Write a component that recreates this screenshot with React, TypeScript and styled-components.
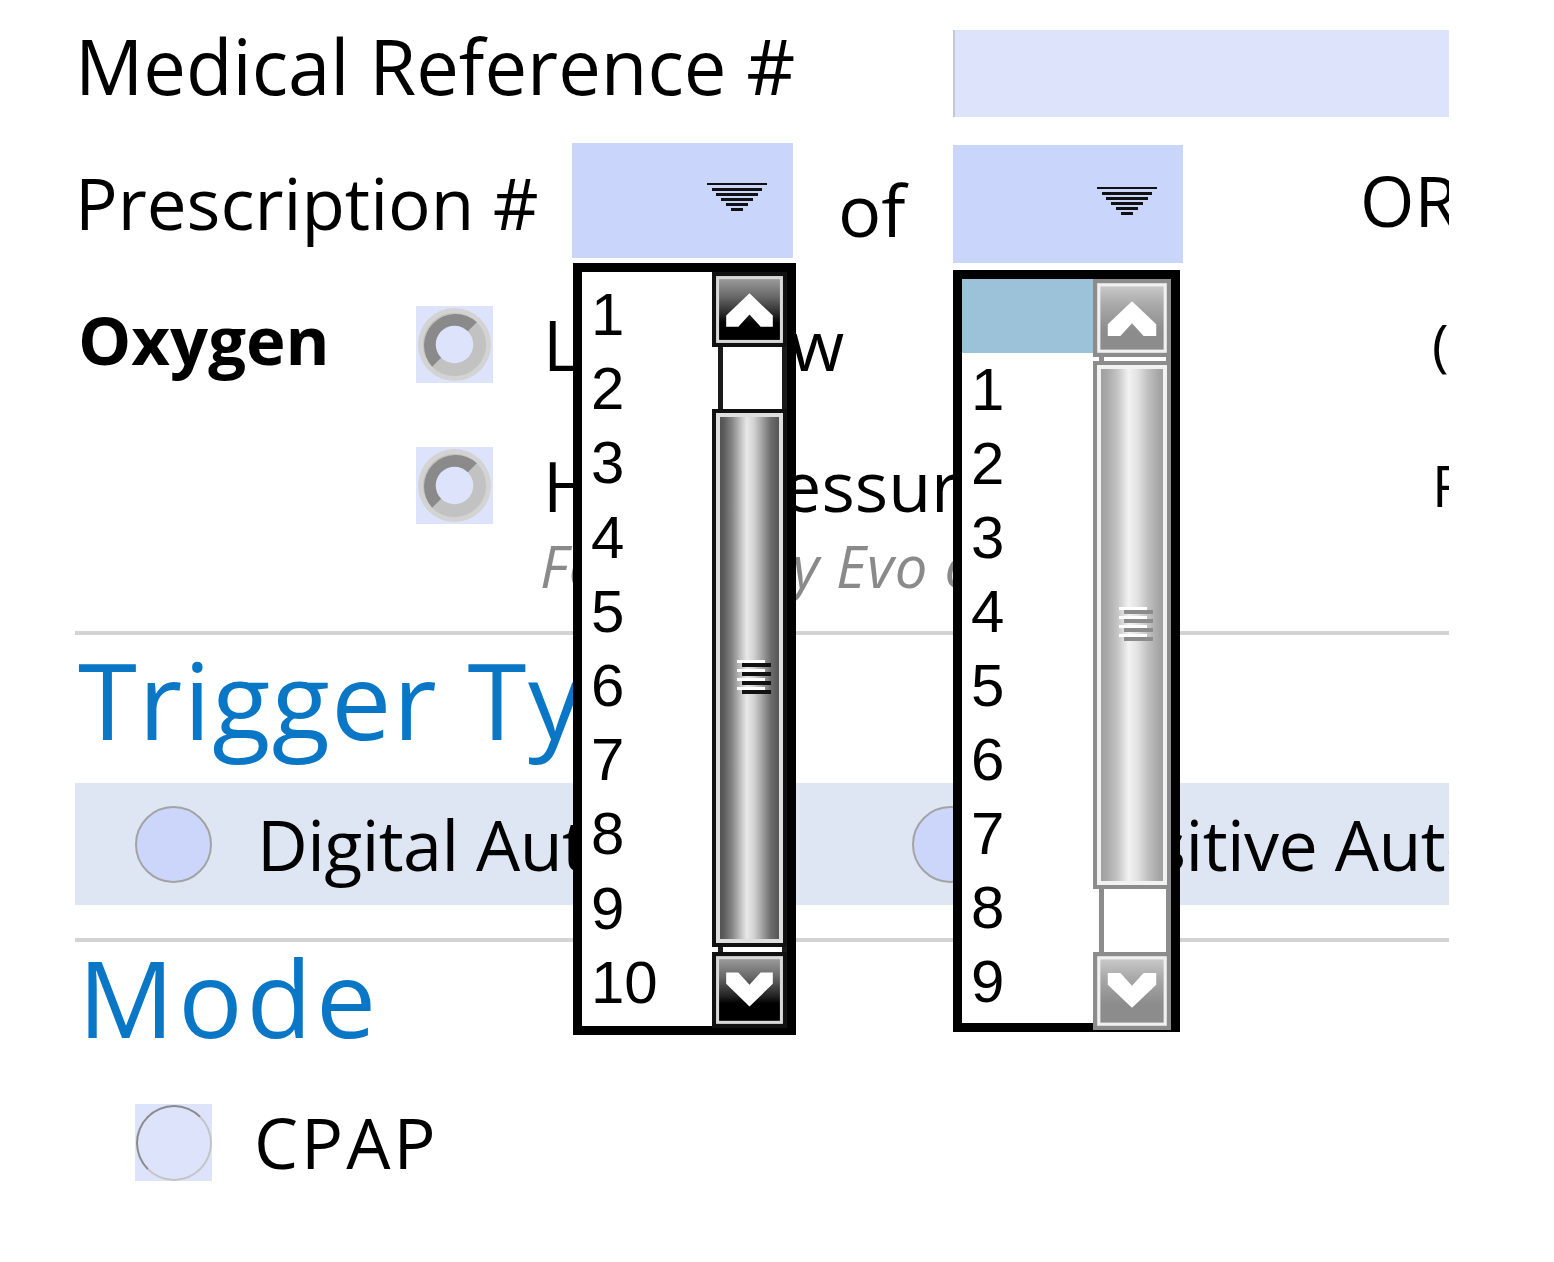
import React from 'react';
import styled, { createGlobalStyle } from 'styled-components';

const GlobalStyle = createGlobalStyle`
  html, body {
    margin: 0;
    padding: 0;
    background: #fff;
  }
  body {
    font-family: "Open Sans", "Noto Sans", sans-serif;
    color: #000;
  }
`;

const Page = styled.div`
  width: 1374px;
  height: 1262px;
  margin-left: 75px;
  overflow: hidden;
`;

/* ---------- header fields ---------- */

const RefRow = styled.div`
  display: flex;
  margin-top: 30px;
  height: 87px;
`;

const FieldLabel = styled.div<{ $width: number; $lh: number; $size: number; $shift?: number }>`
  flex: 0 0 ${p => p.$width}px;
  margin-top: ${p => p.$shift || 0}px;
  font-size: ${p => p.$size}px;
  line-height: ${p => p.$lh}px;
  white-space: nowrap;
`;

const TextInput = styled.div`
  flex: 1;
  background: #dde3fb;
  border-left: 2px solid #c3c7da;
`;

const RxRow = styled.div`
  display: flex;
  align-items: flex-start;
  margin-top: 26px;
  height: 120px;
`;

const SelectWrap = styled.div<{ $w: number; $h: number; $top?: number }>`
  position: relative;
  flex: 0 0 ${p => p.$w}px;
  height: ${p => p.$h}px;
  margin-top: ${p => p.$top || 0}px;
`;

const SelectBox = styled.div<{ $padTop: number }>`
  height: 100%;
  box-sizing: border-box;
  background: #c9d5fb;
  display: flex;
  justify-content: flex-end;
  align-items: flex-start;
  padding: ${p => p.$padTop}px 26px 0 0;
`;

const Joiner = styled.div`
  flex: 0 0 160px;
  box-sizing: border-box;
  padding-left: 45px;
  margin-top: 6px;
  font-size: 72px;
  line-height: 120px;
`;

const OrText = styled.div`
  margin-left: 177px;
  margin-top: -3px;
  font-size: 70px;
  line-height: 120px;
  white-space: nowrap;
`;

/* ---------- open dropdown lists ---------- */

const DropList = styled.div<{ $top: number; $left: number; $w: number; $h: number }>`
  position: absolute;
  top: calc(100% + ${p => p.$top}px);
  left: ${p => p.$left}px;
  width: ${p => p.$w}px;
  height: ${p => p.$h}px;
  box-sizing: border-box;
  border: 9px solid #000;
  background: #fff;
  display: flex;
  z-index: 10;
`;

const ListItems = styled.ul<{ $padTop: number }>`
  flex: 1;
  list-style: none;
  margin: 0;
  padding: ${p => p.$padTop}px 0 0;
  overflow: hidden;
  font-family: "Liberation Sans", Arial, sans-serif;
  font-size: 60px;
`;

const ListItem = styled.li<{ $h: number; $selected?: boolean }>`
  height: ${p => p.$h}px;
  line-height: ${p => p.$h}px;
  padding-left: 9px;
  background: ${p => (p.$selected ? '#9bc2d8' : 'transparent')};
`;

const ScrollColumn = styled.div<{ $w: number }>`
  flex: 0 0 ${p => p.$w}px;
  display: flex;
  flex-direction: column;
`;

const TrackGap = styled.div<{ $h: number; $active: boolean }>`
  flex: 0 0 ${p => p.$h}px;
  margin-left: 6px;
  border-left: 5px solid ${p => (p.$active ? '#1a1a1a' : '#8c8c8c')};
  border-right: 5px solid ${p => (p.$active ? '#1a1a1a' : '#8c8c8c')};
  background: #fff;
`;

const Thumb = styled.div<{ $h: number; $active: boolean }>`
  flex: 0 0 ${p => p.$h}px;
  box-sizing: border-box;
  border: 4px solid ${p => (p.$active ? '#111' : '#8c8c8c')};
  box-shadow: inset 0 0 0 4px ${p => (p.$active ? '#dedede' : '#f2f2f2')};
  background: ${p =>
    p.$active
      ? 'linear-gradient(to right, #4a4a4a 0%, #5c5c5c 12%, #8a8a8a 25%, #bdbdbd 36%, #e8e8e8 46%, #d4d4d4 56%, #a6a6a6 68%, #6c6c6c 82%, #4a4a4a 100%)'
      : 'linear-gradient(to right, #9c9c9c 0%, #a8a8a8 14%, #c6c6c6 30%, #f2f2f2 45%, #e2e2e2 58%, #c2c2c2 72%, #a6a6a6 88%, #9c9c9c 100%)'};
  display: flex;
  align-items: center;
  justify-content: center;
  padding-left: 8px;
`;

const ButtonSlot = styled.div<{ $h: number }>`
  flex: 0 0 ${p => p.$h}px;
  display: flex;

  svg {
    width: 100%;
    height: 100%;
    display: block;
  }
`;

/* ---------- oxygen ---------- */

const OxygenSection = styled.div`
  display: flex;
  margin-top: 43px;
`;

const GroupLabel = styled.div`
  flex: 0 0 341px;
  box-sizing: border-box;
  padding-left: 3px;
  margin-top: -5px;
  font-weight: 700;
  font-size: 67px;
  line-height: 77px;
`;

const OptionList = styled.div`
  display: flex;
  flex-direction: column;
`;

const OptionRow = styled.div<{ $top?: number }>`
  display: flex;
  align-items: center;
  height: 77px;
  margin-top: ${p => p.$top || 0}px;
`;

const OptionText = styled.span<{ $gap: number; $width?: number; $track?: number }>`
  margin-left: ${p => p.$gap}px;
  ${p => (p.$width ? `flex: 0 0 ${p.$width}px;` : '')}
  font-size: 70px;
  line-height: 77px;
  letter-spacing: ${p => p.$track || 0}px;
  white-space: nowrap;
`;

const AsideText = styled.span`
  font-size: 56px;
  line-height: 77px;
  white-space: nowrap;
`;

const Note = styled.div`
  margin: 12px 0 0 124px;
  font-size: 58px;
  font-style: italic;
  letter-spacing: 1px;
  line-height: 60px;
  color: #8a8a8a;
  white-space: nowrap;
`;

/* ---------- sections ---------- */

const Divider = styled.div<{ $top: number }>`
  margin-top: ${p => p.$top}px;
  height: 4px;
  background: #d3d3d3;
`;

const Heading = styled.h2<{ $top?: number; $track?: number }>`
  margin: ${p => p.$top || 0}px 0 0;
  padding-left: 3px;
  font-weight: 400;
  font-size: 107px;
  line-height: 110px;
  letter-spacing: ${p => p.$track || 0}px;
  color: #0a77c6;
  white-space: nowrap;
`;

const TriggerBand = styled.div`
  display: grid;
  grid-template-columns: 777px 777px;
  align-items: center;
  height: 122px;
  margin-top: 29px;
  padding-left: 60px;
  background: #dee6f4;
`;

const TriggerOption = styled.label`
  display: flex;
  align-items: center;
`;

const CircleRadio = styled.span`
  flex: 0 0 77px;
  height: 77px;
  box-sizing: border-box;
  border-radius: 50%;
  border: 2px solid #a3a3a3;
  background: #ccd6fb;
`;

const SquareRadio = styled.span`
  flex: 0 0 77px;
  height: 77px;
  background: #dde3fb;
  display: flex;
  align-items: center;
  justify-content: center;

  &::after {
    content: '';
    width: 76px;
    height: 76px;
    box-sizing: border-box;
    border-radius: 50%;
    border: 2px solid;
    border-color: #8a8a8a #c4c4c4 #c4c4c4 #8a8a8a;
  }
`;

const ModeRow = styled.div`
  display: flex;
  align-items: center;
  height: 77px;
  margin-top: 52px;
  padding-left: 60px;
`;

/* ---------- drawings ---------- */

function SelectArrow() {
  const bars = [
    [0, 0, 60, 2],
    [5, 5, 50, 3],
    [9, 10, 42, 3],
    [14, 15, 32, 3],
    [19, 20, 22, 3],
    [24, 25, 12, 3],
  ];
  return (
    <svg width="60" height="28" viewBox="0 0 60 28">
      {bars.map(([x, y, w, h], i) => (
        <rect key={i} x={x} y={y} width={w} height={h} fill="#111" />
      ))}
    </svg>
  );
}

function RingRadio() {
  return (
    <svg width="77" height="77" viewBox="0 0 78 78">
      <rect width="78" height="78" fill="#dde3fb" />
      <circle cx="39" cy="39" r="37" fill="#d3d3d3" />
      <circle cx="39" cy="39" r="32" fill="#c2c2c2" />
      <path d="M39 39 L61.6 16.4 A32 32 0 0 0 16.4 61.6 Z" fill="#8a8a8a" />
      <circle cx="39" cy="39" r="19" fill="#dde3fb" />
    </svg>
  );
}

function ScrollButton({ dir, active }: { dir: 'up' | 'down'; active: boolean }) {
  const id = `sb-${dir}-${active ? 'a' : 'i'}`;
  const frame = active ? '#111' : '#8c8c8c';
  const inner = active ? '#d8d8d8' : '#f0f0f0';
  const stops = active
    ? ['#9a9a9a', '#666', '#222', '#000']
    : ['#c8c8c8', '#a8a8a8', '#939393', '#8c8c8c'];
  const points =
    dir === 'up'
      ? '14,54 14,43 37,21 60,43 60,54 48,54 37,42 26,54'
      : '14,20 14,31 37,53 60,31 60,20 48,20 37,32 26,20';
  return (
    <svg viewBox="0 0 74 74" preserveAspectRatio="none">
      <defs>
        <linearGradient id={id} x1="0" y1="0" x2="0" y2="1">
          <stop offset="0" stopColor={stops[0]} />
          <stop offset="0.3" stopColor={stops[1]} />
          <stop offset="0.6" stopColor={stops[2]} />
          <stop offset="0.72" stopColor={stops[3]} />
          <stop offset="1" stopColor={stops[3]} />
        </linearGradient>
      </defs>
      <rect width="74" height="74" fill={frame} />
      <rect x="4" y="4" width="66" height="66" fill={inner} />
      <rect x="7" y="7" width="60" height="60" fill={`url(#${id})`} />
      <polygon points={points} fill="#fff" />
    </svg>
  );
}

function Grip({ active }: { active: boolean }) {
  const line = active ? '#111' : '#8c8c8c';
  return (
    <svg width="34" height="36" viewBox="0 0 34 36">
      {[0, 1, 2, 3].map(i => (
        <g key={i}>
          <rect x="0" y={i * 9} width="28" height="3" fill="#fff" />
          <rect x="5" y={i * 9 + 3} width="29" height="4" fill={line} />
        </g>
      ))}
    </svg>
  );
}

type ScrollSpec = { up: number; above: number; thumb: number; below: number; down: number };

function Scrollbar({ active, width, spec }: { active: boolean; width: number; spec: ScrollSpec }) {
  return (
    <ScrollColumn $w={width}>
      <ButtonSlot $h={spec.up}>
        <ScrollButton dir="up" active={active} />
      </ButtonSlot>
      <TrackGap $h={spec.above} $active={active} />
      <Thumb $h={spec.thumb} $active={active}>
        <Grip active={active} />
      </Thumb>
      <TrackGap $h={spec.below} $active={active} />
      <ButtonSlot $h={spec.down}>
        <ScrollButton dir="down" active={active} />
      </ButtonSlot>
    </ScrollColumn>
  );
}

const prescriptionNumbers = ['1', '2', '3', '4', '5', '6', '7', '8', '9', '10'];
const totalNumbers = ['', '1', '2', '3', '4', '5', '6', '7', '8', '9'];

export default function App() {
  return (
    <Page>
      <GlobalStyle />

      <RefRow>
        <FieldLabel $width={878} $lh={87} $size={76} $shift={-8}>Medical Reference #</FieldLabel>
        <TextInput />
      </RefRow>

      <RxRow>
        <FieldLabel $width={497} $lh={120} $size={71}>Prescription #</FieldLabel>
        <SelectWrap $w={221} $h={115}>
          <SelectBox $padTop={40}>
            <SelectArrow />
          </SelectBox>
          <DropList $top={5} $left={1} $w={223} $h={772}>
            <ListItems $padTop={6}>
              {prescriptionNumbers.map(n => (
                <ListItem key={n} $h={74.2}>{n}</ListItem>
              ))}
            </ListItems>
            <Scrollbar active width={75} spec={{ up: 73, above: 62, thumb: 538, below: 5, down: 76 }} />
          </DropList>
        </SelectWrap>
        <Joiner>of</Joiner>
        <SelectWrap $w={230} $h={118} $top={2}>
          <SelectBox $padTop={42}>
            <SelectArrow />
          </SelectBox>
          <DropList $top={7} $left={0} $w={227} $h={762}>
            <ListItems $padTop={0}>
              {totalNumbers.map((n, i) => (
                <ListItem key={i} $h={74} $selected={i === 0}>{n}</ListItem>
              ))}
            </ListItems>
            <Scrollbar active={false} width={78} spec={{ up: 74, above: 4, thumb: 528, below: 63, down: 75 }} />
          </DropList>
        </SelectWrap>
        <OrText>OR</OrText>
      </RxRow>

      <OxygenSection>
        <GroupLabel>Oxygen</GroupLabel>
        <OptionList>
          <OptionRow>
            <RingRadio />
            <OptionText $gap={50} $width={889}>Low Flow</OptionText>
            <AsideText>(L/min)</AsideText>
          </OptionRow>
          <OptionRow $top={64}>
            <RingRadio />
            <OptionText $gap={50} $width={889}>High Pressure</OptionText>
            <AsideText>FiO2</AsideText>
          </OptionRow>
          <Note>For Trilogy Evo only</Note>
        </OptionList>
      </OxygenSection>

      <Divider $top={35} />
      <Heading $top={9} $track={1.5}>Trigger Type</Heading>
      <TriggerBand>
        <TriggerOption>
          <CircleRadio />
          <OptionText $gap={45} $track={-0.6}>Digital Auto-Trak</OptionText>
        </TriggerOption>
        <TriggerOption>
          <CircleRadio />
          <OptionText $gap={45} $track={-0.6}>Sensitive Auto-Trak</OptionText>
        </TriggerOption>
      </TriggerBand>

      <Divider $top={33} />
      <Heading $track={4}>Mode</Heading>
      <ModeRow>
        <SquareRadio />
        <OptionText $gap={42} $track={3}>CPAP</OptionText>
      </ModeRow>
    </Page>
  );
}
